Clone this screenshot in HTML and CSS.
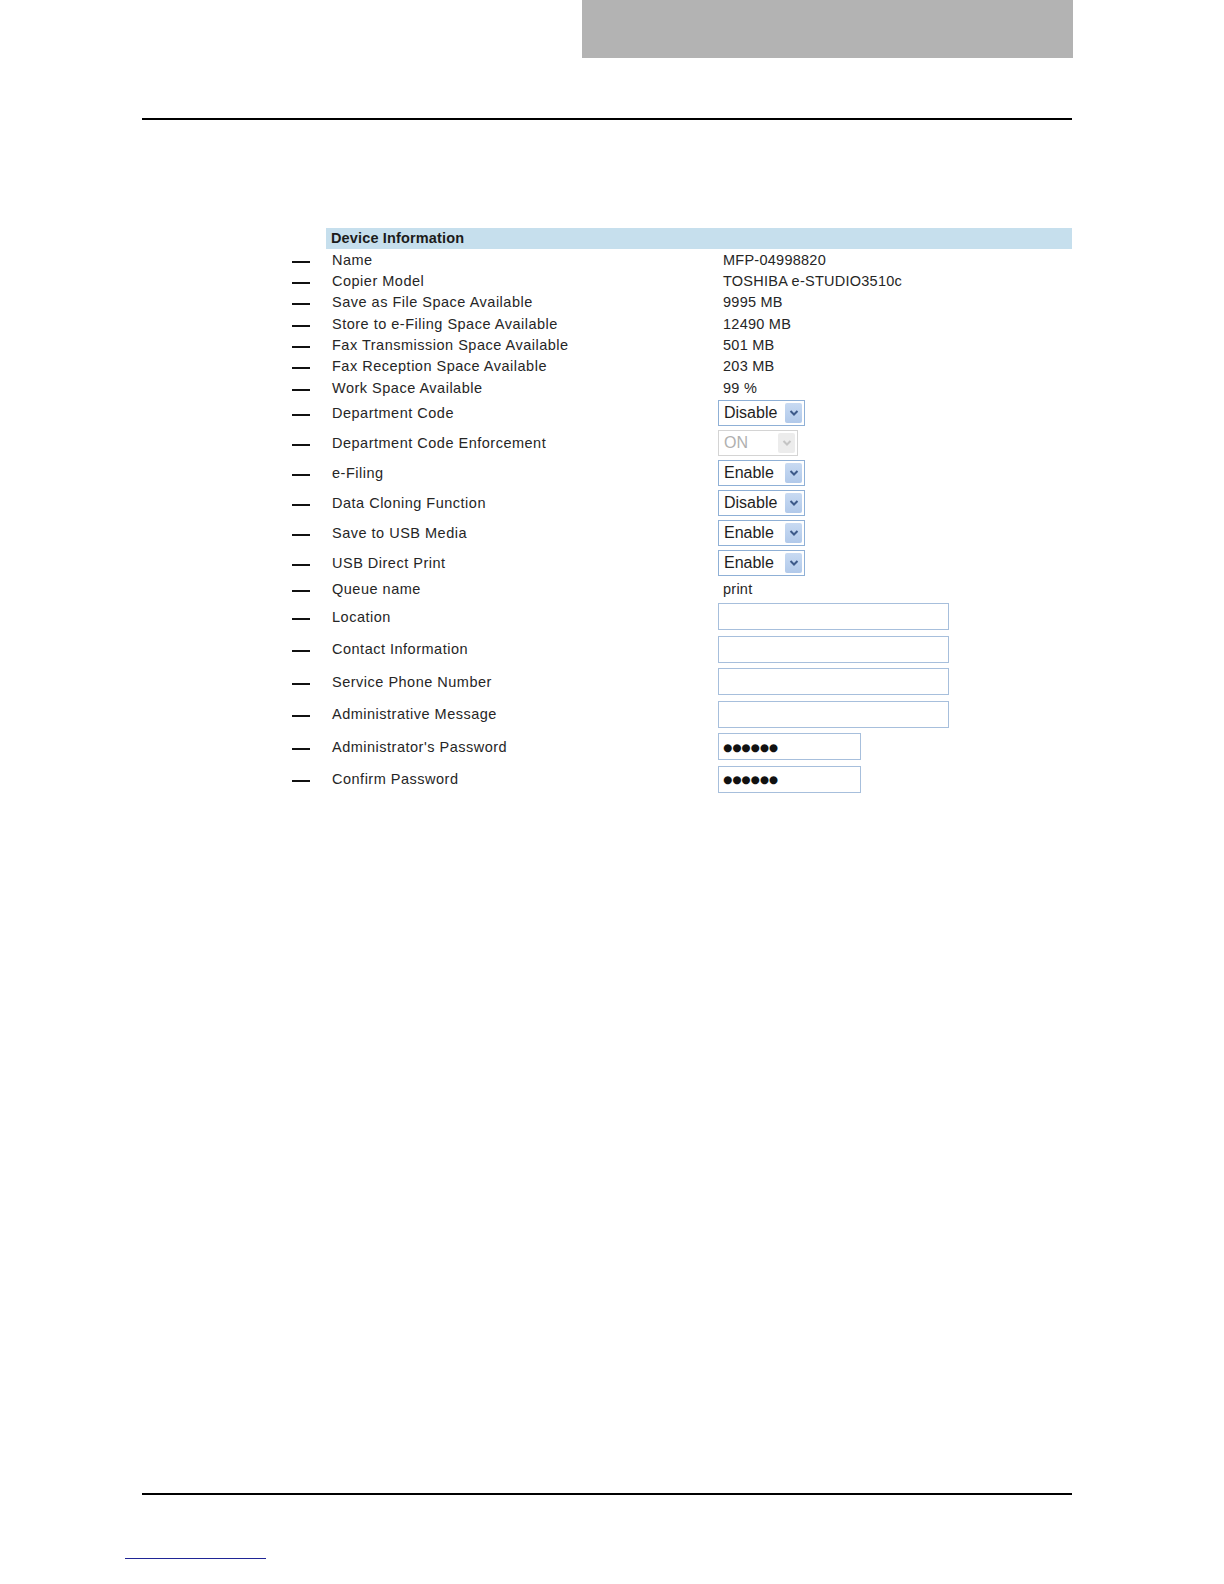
FILE: index.html
```html
<!DOCTYPE html>
<html lang="en">
<head>
<meta charset="utf-8">
<title>Device Information</title>
<link rel="stylesheet" href="styles.css">
</head>
<body>
<div class="page">
  <div class="topbar"><div class="graybox"></div></div>
  <div class="rule top-rule"></div>

  <div class="info">
    <div class="info-head"><span class="spacer"></span><div class="head-bar">Device Information</div></div>

    <div class="row r-text"><span class="dash"></span><span class="label">Name</span><span class="value">MFP-04998820</span></div>
    <div class="row r-text"><span class="dash"></span><span class="label">Copier Model</span><span class="value">TOSHIBA e-STUDIO3510c</span></div>
    <div class="row r-text"><span class="dash"></span><span class="label">Save as File Space Available</span><span class="value">9995 MB</span></div>
    <div class="row r-text"><span class="dash"></span><span class="label">Store to e-Filing Space Available</span><span class="value">12490 MB</span></div>
    <div class="row r-text"><span class="dash"></span><span class="label">Fax Transmission Space Available</span><span class="value">501 MB</span></div>
    <div class="row r-text"><span class="dash"></span><span class="label">Fax Reception Space Available</span><span class="value">203 MB</span></div>
    <div class="row r-text"><span class="dash"></span><span class="label">Work Space Available</span><span class="value">99 %</span></div>

    <div class="row r-select"><span class="dash"></span><span class="label">Department Code</span>
      <div class="value"><div class="sel"><span class="sel-text">Disable</span><span class="sel-btn"><svg viewBox="0 0 10 8" width="10" height="8"><path d="M1.5 2 L5 5.5 L8.5 2" fill="none" stroke="#3d5a8a" stroke-width="2"/></svg></span></div></div></div>
    <div class="row r-select"><span class="dash"></span><span class="label">Department Code Enforcement</span>
      <div class="value"><div class="sel sel-disabled"><span class="sel-text">ON</span><span class="sel-btn"><svg viewBox="0 0 10 8" width="10" height="8"><path d="M1.5 2 L5 5.5 L8.5 2" fill="none" stroke="#c4c4c4" stroke-width="2"/></svg></span></div></div></div>
    <div class="row r-select"><span class="dash"></span><span class="label">e-Filing</span>
      <div class="value"><div class="sel"><span class="sel-text">Enable</span><span class="sel-btn"><svg viewBox="0 0 10 8" width="10" height="8"><path d="M1.5 2 L5 5.5 L8.5 2" fill="none" stroke="#3d5a8a" stroke-width="2"/></svg></span></div></div></div>
    <div class="row r-select"><span class="dash"></span><span class="label">Data Cloning Function</span>
      <div class="value"><div class="sel"><span class="sel-text">Disable</span><span class="sel-btn"><svg viewBox="0 0 10 8" width="10" height="8"><path d="M1.5 2 L5 5.5 L8.5 2" fill="none" stroke="#3d5a8a" stroke-width="2"/></svg></span></div></div></div>
    <div class="row r-select"><span class="dash"></span><span class="label">Save to USB Media</span>
      <div class="value"><div class="sel"><span class="sel-text">Enable</span><span class="sel-btn"><svg viewBox="0 0 10 8" width="10" height="8"><path d="M1.5 2 L5 5.5 L8.5 2" fill="none" stroke="#3d5a8a" stroke-width="2"/></svg></span></div></div></div>
    <div class="row r-select"><span class="dash"></span><span class="label">USB Direct Print</span>
      <div class="value"><div class="sel"><span class="sel-text">Enable</span><span class="sel-btn"><svg viewBox="0 0 10 8" width="10" height="8"><path d="M1.5 2 L5 5.5 L8.5 2" fill="none" stroke="#3d5a8a" stroke-width="2"/></svg></span></div></div></div>

    <div class="row r-queue"><span class="dash"></span><span class="label">Queue name</span><span class="value">print</span></div>

    <div class="row r-input"><span class="dash"></span><span class="label">Location</span><div class="value"><div class="field"></div></div></div>
    <div class="row r-input"><span class="dash"></span><span class="label">Contact Information</span><div class="value"><div class="field"></div></div></div>
    <div class="row r-input"><span class="dash"></span><span class="label">Service Phone Number</span><div class="value"><div class="field"></div></div></div>
    <div class="row r-input"><span class="dash"></span><span class="label">Administrative Message</span><div class="value"><div class="field"></div></div></div>
    <div class="row r-input"><span class="dash"></span><span class="label">Administrator's Password</span><div class="value"><div class="field field-pw"><span class="dots">●●●●●●</span></div></div></div>
    <div class="row r-input"><span class="dash"></span><span class="label">Confirm Password</span><div class="value"><div class="field field-pw"><span class="dots">●●●●●●</span></div></div></div>
  </div>

  <div class="rule bottom-rule"></div>
  <div class="footer-link"></div>
</div>
</body>
</html>
```

FILE: styles.css
```css
html, body {
  margin: 0;
  padding: 0;
  background: #ffffff;
}

.page {
  width: 1224px;
  height: 1584px;
  position: relative;
  font-family: "Liberation Sans", Arial, sans-serif;
  color: #262626;
}

.topbar {
  height: 58px;
  padding-left: 582px;
}

.graybox {
  width: 491px;
  height: 58px;
  background: #b3b3b3;
}

.rule {
  height: 2px;
  background: #000;
  margin-left: 142px;
  width: 930px;
}

.top-rule {
  margin-top: 60px;
}

.info {
  margin-top: 108px;
  margin-left: 292px;
  width: 780px;
}

.info-head {
  display: flex;
  height: 21px;
}

.spacer {
  width: 34px;
  flex: none;
}

.head-bar {
  flex: 1;
  background: #c6dfed;
  font-weight: bold;
  font-size: 14.5px;
  line-height: 21px;
  padding-left: 5px;
  color: #1b1b1b;
  letter-spacing: 0.15px;
}

.row {
  display: flex;
  align-items: center;
  font-size: 14.5px;
  letter-spacing: 0.5px;
}

.r-text { height: 21.35px; }
.r-select { height: 30px; }
.r-queue { height: 22px; }
.r-input { height: 32.5px; }

.dash {
  width: 18px;
  height: 2px;
  background: #111;
  flex: none;
  margin-right: 22px;
  position: relative;
  top: 2px;
}

.label {
  width: 386px;
  flex: none;
}

.value {
  display: flex;
  align-items: center;
  letter-spacing: 0.25px;
}

span.value {
  padding-left: 5px;
}

.sel {
  width: 85px;
  height: 24px;
  border: 1px solid #8fb0d6;
  display: flex;
  align-items: center;
  justify-content: space-between;
  background: #fff;
  letter-spacing: 0;
  font-size: 16px;
  color: #1e1e1e;
}

.sel-text {
  padding-left: 5px;
}

.sel-btn {
  width: 17px;
  height: 20px;
  margin-right: 2px;
  background: linear-gradient(#c8daf2, #b1c9ea);
  border-radius: 2px;
  display: flex;
  align-items: center;
  justify-content: center;
}

.sel-disabled {
  width: 78px;
  border-color: #d4d4d4;
  color: #b0b0b0;
}

.sel-disabled .sel-btn {
  background: #ececec;
}

.field {
  width: 229px;
  height: 25px;
  border: 1px solid #a7bfdc;
  background: #fff;
  display: flex;
  align-items: center;
}

.field-pw {
  width: 141px;
}

.dots {
  font-family: "DejaVu Sans", sans-serif;
  font-size: 10.5px;
  letter-spacing: 0;
  color: #111;
  padding-left: 4px;
}

.bottom-rule {
  position: absolute;
  top: 1493px;
  left: 0;
}

.footer-link {
  position: absolute;
  top: 1558px;
  left: 125px;
  width: 141px;
  height: 1px;
  background: #1f2596;
}
```
